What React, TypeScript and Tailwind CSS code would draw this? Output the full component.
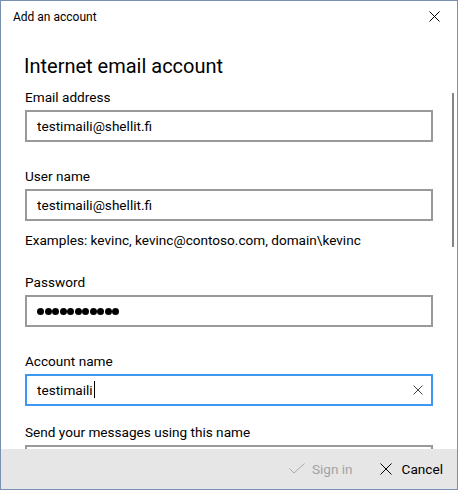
import React from 'react'

const font = { fontFamily: 'Roboto, "Noto Sans", "Liberation Sans", sans-serif' }

function XIcon({ size = 10, color = '#000', stroke = 1 }: { size?: number; color?: string; stroke?: number }) {
  return (
    <svg width={size} height={size} viewBox={`0 0 ${size} ${size}`} fill="none">
      <path d={`M0.5 0.5 L${size - 0.5} ${size - 0.5} M${size - 0.5} 0.5 L0.5 ${size - 0.5}`} stroke={color} strokeWidth={stroke} />
    </svg>
  )
}

function Field({ label, children, focused = false, mt = 'mt-[24px]' }: { label: string; children?: React.ReactNode; focused?: boolean; mt?: string }) {
  return (
    <div className={mt}>
      <div className="h-[20px] leading-[20px] text-[13.6px] text-black">{label}</div>
      <div
        className={
          'mt-[3px] h-[32px] border-2 flex items-center pl-[10px] pr-[8px] text-[13.6px] text-black ' +
          (focused ? 'border-[#3d98f2]' : 'border-[#999999]')
        }
      >
        {children}
      </div>
    </div>
  )
}

export default function App() {
  return (
    <div className="w-[458px] h-[490px] bg-white border border-[#7891b3] flex flex-col overflow-hidden" style={font}>
      <div className="h-[31px] flex items-center justify-between pl-[12px] pr-[17px] shrink-0">
        <span className="text-[12px] text-black">Add an account</span>
        <XIcon size={11} />
      </div>

      <div className="flex-1 relative overflow-hidden px-[24px]">
        <div className="absolute right-[3px] top-[61px] w-[2px] h-[154px] bg-[#858585]" />

        <h1 className="pt-[20px] -ml-px h-[48px] leading-[28px] text-[20px] text-black">Internet email account</h1>

        <Field label="Email address" mt="mt-[7px]">testimaili@shellit.fi</Field>
        <Field label="User name">testimaili@shellit.fi</Field>
        <div className="mt-[9px] h-[20px] leading-[20px] text-[13.6px] text-black">
          Examples: kevinc, kevinc@contoso.com, domain\kevinc
        </div>
        <Field label="Password" mt="mt-[22px]">
          <div className="flex gap-[0.5px]">
            {Array.from({ length: 11 }).map((_, i) => (
              <span key={i} className="w-[7px] h-[7px] rounded-full bg-black" />
            ))}
          </div>
        </Field>
        <Field label="Account name" focused>
          <span className="flex-1 flex items-center">
            testimaili
            <span className="w-px h-[17px] bg-black ml-px" />
          </span>
          <XIcon color="#444" />
        </Field>
        <Field label="Send your messages using this name" mt="mt-[16px]" />
      </div>

      <div className="h-[40px] shrink-0 bg-[#e6e6e6] flex items-center justify-end pr-[14px] text-[13.6px]">
        <div className="flex items-center gap-[7px] text-[#a3a3a3]">
          <svg width="16" height="11" viewBox="0 0 16 11" fill="none">
            <path d="M0.5 5.5 L5 10 L15.5 0.5" stroke="#a8a8a8" strokeWidth="1" />
          </svg>
          <span>Sign in</span>
        </div>
        <div className="flex items-center gap-[10px] ml-[27px] text-black">
          <XIcon size={12} />
          <span>Cancel</span>
        </div>
      </div>
    </div>
  )
}
